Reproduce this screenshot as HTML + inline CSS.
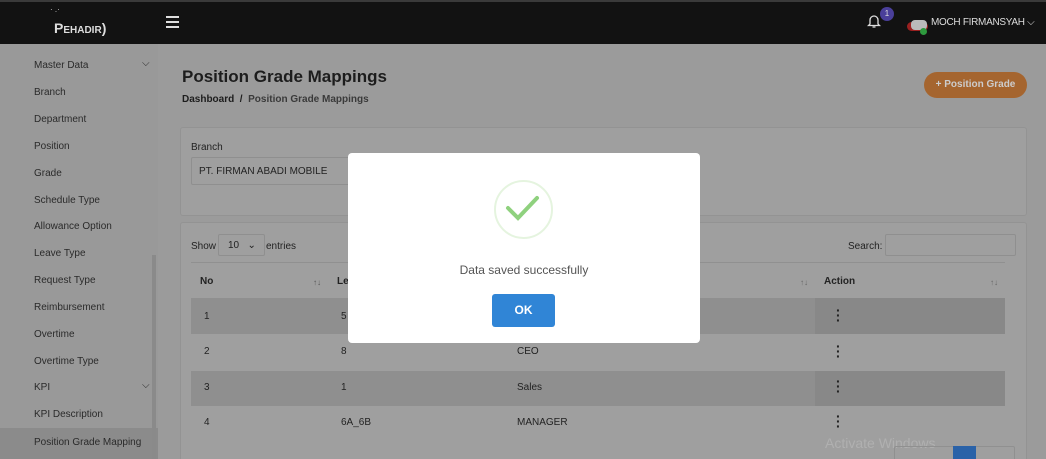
<!DOCTYPE html>
<html><head><meta charset="utf-8"><style>
*{box-sizing:border-box;margin:0;padding:0}
html,body{width:1046px;height:459px;overflow:hidden}
body{background:#9b9b9b;font-family:"Liberation Sans",sans-serif;position:relative;color:#1f1f1f}
.a{position:absolute;white-space:nowrap}
.hdr{left:0;top:0;width:1046px;height:44px;background:#121212;border-top:2px solid #3a3a3a}
.side{left:0;top:44px;width:158px;height:415px;background:#999}
.si{left:34px;font-size:10px;color:#2a2a2a}
.card{background:#9f9f9f;border:1px solid #939393;border-radius:3px}
.cell{font-size:10px;color:#222}
</style></head><body>
<div class="a hdr"></div>
<div class="a" style="left:50px;top:5px;color:#ccc;font-size:8px">· .·</div>
<div class="a" style="left:54px;top:20px;color:#ddd;font-size:14px;font-weight:bold">P<span style="font-size:10px">EHADIR</span>)</div>
<div class="a" style="left:166px;top:16px;width:13px;height:2px;background:#ddd;box-shadow:0 5px 0 #ddd,0 10px 0 #ddd"></div>
<svg class="a" style="left:867px;top:13px" width="14" height="16" viewBox="0 0 14 16"><path d="M3 11V7a4 4 0 0 1 8 0v4l1.5 1.5h-11z M5.5 14h3" fill="none" stroke="#ddd" stroke-width="1.3"/></svg>
<div class="a" style="left:880px;top:7px;width:14px;height:14px;border-radius:50%;background:#4a3f9a;color:#ddd;font-size:8px;text-align:center;line-height:14px">1</div>
<div class="a" style="left:907px;top:22px;width:21px;height:9px;border-radius:5px;background:#9a2020"></div>
<div class="a" style="left:911px;top:20px;width:16px;height:10px;border-radius:4px;background:#bbb"></div>
<div class="a" style="left:920px;top:28px;width:7px;height:7px;border-radius:50%;background:#2e9a3e"></div>
<div class="a" style="left:931px;top:17px;font-size:10px;color:#ddd;letter-spacing:-0.3px">MOCH FIRMANSYAH ⌵</div>

<div class="a side"></div>
<div class="a" style="left:0;top:428px;width:158px;height:31px;background:#8b8b8b"></div>
<div class="a" style="left:152px;top:255px;width:4px;height:204px;background:#8a8a8a"></div>
<div class="a si" style="top:60px">Master Data</div><div class="a si" style="left:142px;top:58px">⌵</div>
<div class="a si" style="top:87px">Branch</div>
<div class="a si" style="top:114px">Department</div>
<div class="a si" style="top:141px">Position</div>
<div class="a si" style="top:168px">Grade</div>
<div class="a si" style="top:195px">Schedule Type</div>
<div class="a si" style="top:221px">Allowance Option</div>
<div class="a si" style="top:248px">Leave Type</div>
<div class="a si" style="top:275px">Request Type</div>
<div class="a si" style="top:302px">Reimbursement</div>
<div class="a si" style="top:329px">Overtime</div>
<div class="a si" style="top:356px">Overtime Type</div>
<div class="a si" style="top:382px">KPI</div><div class="a si" style="left:142px;top:380px">⌵</div>
<div class="a si" style="top:409px">KPI Description</div>
<div class="a si" style="top:437px">Position Grade Mapping</div>

<div class="a" style="left:182px;top:67px;font-size:17px;font-weight:bold;color:#1d1d1d">Position Grade Mappings</div>
<div class="a" style="left:182px;top:94px;font-size:10px;font-weight:bold;color:#1d1d1d">Dashboard &nbsp;/ &nbsp;<span style="color:#3a3a3a">Position Grade Mappings</span></div>
<div class="a" style="left:924px;top:72px;width:103px;height:26px;border-radius:13px;background:#a5652f;color:#ccc;font-size:10px;font-weight:bold;text-align:center;line-height:26px">+ Position Grade</div>

<div class="a card" style="left:180px;top:127px;width:847px;height:89px"></div>
<div class="a cell" style="left:191px;top:142px">Branch</div>
<div class="a" style="left:191px;top:157px;width:170px;height:28px;border:1px solid #8f8f8f;border-radius:2px"></div>
<div class="a cell" style="left:199px;top:166px">PT. FIRMAN ABADI MOBILE</div>

<div class="a card" style="left:180px;top:222px;width:847px;height:250px"></div>
<div class="a cell" style="left:191px;top:241px">Show</div>
<div class="a" style="left:218px;top:234px;width:47px;height:22px;border:1px solid #8f8f8f;border-radius:2px"></div>
<div class="a cell" style="left:228px;top:240px">10 &nbsp;&nbsp;⌄</div>
<div class="a cell" style="left:266px;top:241px">entries</div>
<div class="a cell" style="left:848px;top:241px">Search:</div>
<div class="a" style="left:885px;top:234px;width:131px;height:22px;border:1px solid #8f8f8f;border-radius:2px"></div>
<div class="a" style="left:191px;top:262px;width:814px;height:1px;background:#909090"></div>
<div class="a cell" style="left:200px;top:276px;font-weight:bold">No</div>
<div class="a" style="left:313px;top:278px;font-size:8px;color:#555">↑↓</div>
<div class="a cell" style="left:337px;top:276px;font-weight:bold">Le</div>
<div class="a" style="left:800px;top:278px;font-size:8px;color:#666">↑↓</div>
<div class="a cell" style="left:824px;top:276px;font-weight:bold">Action</div>
<div class="a" style="left:990px;top:278px;font-size:8px;color:#666">↑↓</div>
<div class="a" style="left:191px;top:298px;width:814px;height:36px;background:#8f8f8f"></div>
<div class="a" style="left:815px;top:298px;width:190px;height:36px;background:#888"></div>
<div class="a" style="left:191px;top:371px;width:814px;height:35px;background:#8f8f8f"></div>
<div class="a" style="left:815px;top:371px;width:190px;height:35px;background:#888"></div>
<div class="a cell" style="left:204px;top:311px">1</div><div class="a cell" style="left:341px;top:311px">5</div>
<div class="a cell" style="left:204px;top:346px">2</div><div class="a cell" style="left:341px;top:346px">8</div><div class="a cell" style="left:517px;top:346px">CEO</div>
<div class="a cell" style="left:204px;top:382px">3</div><div class="a cell" style="left:341px;top:382px">1</div><div class="a cell" style="left:517px;top:382px">Sales</div>
<div class="a cell" style="left:204px;top:417px">4</div><div class="a cell" style="left:341px;top:417px">6A_6B</div><div class="a cell" style="left:517px;top:417px">MANAGER</div>
<div class="a" style="left:836px;top:308px;font-size:14px;font-weight:bold;line-height:5px;color:#222">·<br>·<br>·</div>
<div class="a" style="left:836px;top:344px;font-size:14px;font-weight:bold;line-height:5px;color:#222">·<br>·<br>·</div>
<div class="a" style="left:836px;top:379px;font-size:14px;font-weight:bold;line-height:5px;color:#222">·<br>·<br>·</div>
<div class="a" style="left:836px;top:414px;font-size:14px;font-weight:bold;line-height:5px;color:#222">·<br>·<br>·</div>
<div class="a" style="left:825px;top:435px;font-size:14px;color:#b0b0b0">Activate Windows</div>
<div class="a" style="left:894px;top:446px;width:121px;height:20px;border:1px solid #909090;border-radius:2px"></div>
<div class="a" style="left:953px;top:446px;width:23px;height:20px;background:#2a62a8"></div>

<div class="a" style="left:348px;top:153px;width:352px;height:190px;background:#fff;border-radius:4px"></div>
<div class="a" style="left:494px;top:180px;width:59px;height:59px;border-radius:50%;border:2px solid #e5f4df"></div>
<svg class="a" style="left:505px;top:194px" width="40" height="30" viewBox="0 0 40 30"><path d="M3 14l10 10L32 4" fill="none" stroke="#8fd17e" stroke-width="4" stroke-linecap="round"/></svg>
<div class="a" style="left:348px;top:263px;width:352px;text-align:center;font-size:12px;color:#545454">Data saved successfully</div>
<div class="a" style="left:492px;top:294px;width:63px;height:33px;background:#3085d6;border-radius:3px;color:#fff;font-size:12px;font-weight:bold;text-align:center;line-height:33px">OK</div>
</body></html>
